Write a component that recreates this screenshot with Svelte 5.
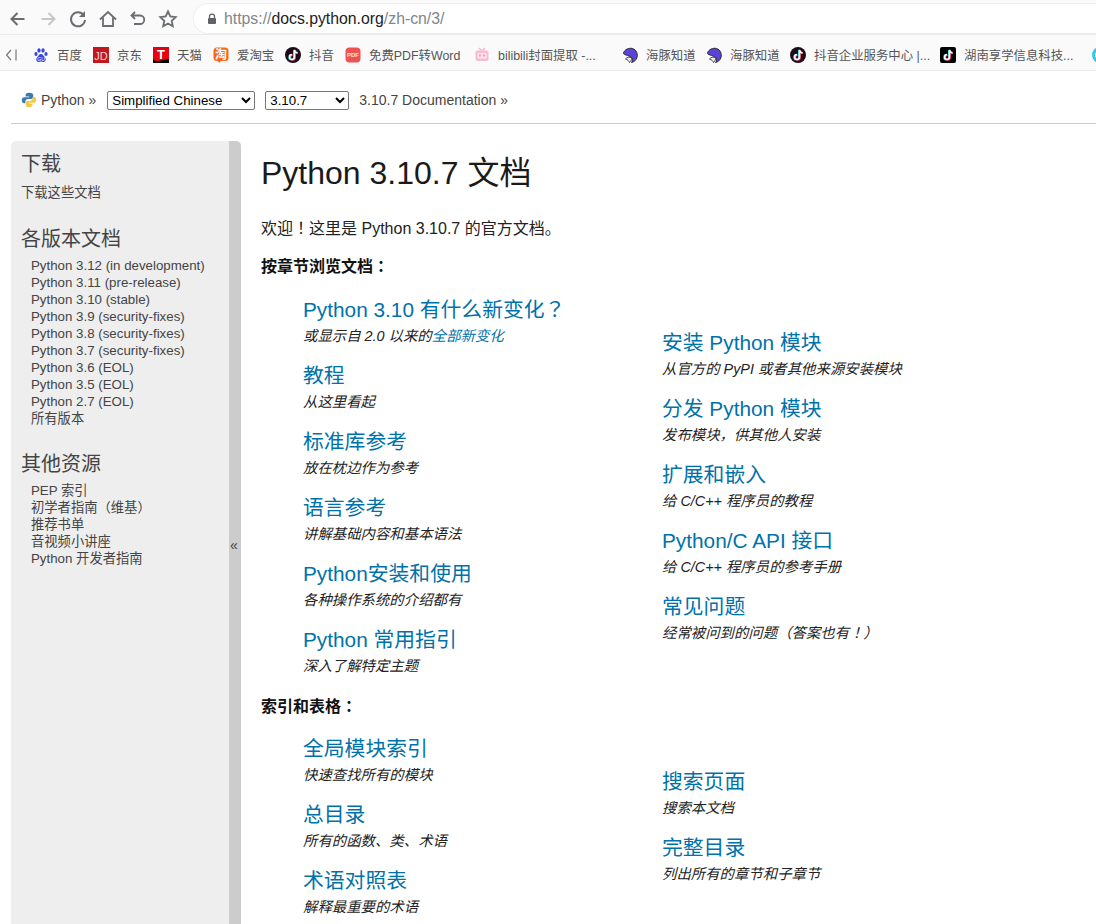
<script>
  const bookmarks = [
    { icon: 'baidu', label: '百度', w: 60 },
    { icon: 'jd', label: '京东', w: 60 },
    { icon: 'tmall', label: '天猫', w: 60 },
    { icon: 'taobao', label: '爱淘宝', w: 72 },
    { icon: 'tiktok', label: '抖音', w: 60 },
    { icon: 'pdf', label: '免费PDF转Word', w: 129 },
    { icon: 'bili', label: 'bilibili封面提取 -...', w: 148 },
    { icon: 'dolphin', label: '海豚知道', w: 84 },
    { icon: 'dolphin', label: '海豚知道', w: 84 },
    { icon: 'tiktok', label: '抖音企业服务中心 |...', w: 150 },
    { icon: 'tiktok2', label: '湖南享学信息科技...', w: 150 }
  ]
  const versions = [
    'Python 3.12 (in development)', 'Python 3.11 (pre-release)', 'Python 3.10 (stable)',
    'Python 3.9 (security-fixes)', 'Python 3.8 (security-fixes)', 'Python 3.7 (security-fixes)',
    'Python 3.6 (EOL)', 'Python 3.5 (EOL)', 'Python 2.7 (EOL)', '所有版本'
  ]
  const others = ['PEP 索引', '初学者指南（维基）', '推荐书单', '音视频小讲座', 'Python 开发者指南']
  const left1 = [
    ['Python 3.10 有什么新变化？', '或显示自 2.0 以来的', '全部新变化'],
    ['教程', '从这里看起'],
    ['标准库参考', '放在枕边作为参考'],
    ['语言参考', '讲解基础内容和基本语法'],
    ['Python安装和使用', '各种操作系统的介绍都有'],
    ['Python 常用指引', '深入了解特定主题']
  ]
  const right1 = [
    ['安装 Python 模块', '从官方的 PyPI 或者其他来源安装模块'],
    ['分发 Python 模块', '发布模块，供其他人安装'],
    ['扩展和嵌入', '给 C/C++ 程序员的教程'],
    ['Python/C API 接口', '给 C/C++ 程序员的参考手册'],
    ['常见问题', '经常被问到的问题（答案也有！）']
  ]
  const left2 = [
    ['全局模块索引', '快速查找所有的模块'],
    ['总目录', '所有的函数、类、术语'],
    ['术语对照表', '解释最重要的术语']
  ]
  const right2 = [
    ['搜索页面', '搜索本文档'],
    ['完整目录', '列出所有的章节和子章节']
  ]

  // full-width punctuation sits centred in the cell in the TC cut of the font
  const parts = (text) => text.split(/([！？（）：])/).filter(Boolean)
  const isPunct = (s) => /^[！？（）：]$/.test(s)
</script>

{#snippet txt(text)}
  {#each parts(text) as p}{#if isPunct(p)}<span class="punct">{p}</span>{:else}{p}{/if}{/each}
{/snippet}

{#snippet favicon(kind)}
  <svg class="fav" viewBox="0 0 16 16" width="16" height="16">
    {#if kind === 'baidu'}
      <ellipse cx="3" cy="7" rx="1.6" ry="2" fill="#3245df" /><ellipse cx="6" cy="3.4" rx="1.6" ry="2.2" fill="#3245df" />
      <ellipse cx="10" cy="3.4" rx="1.6" ry="2.2" fill="#3245df" /><ellipse cx="13" cy="7" rx="1.6" ry="2" fill="#3245df" />
      <path d="M8 7c-2 0-2.4 2-4 3.4C2.6 12 3.4 15 6 15c1 0 1.400-.4 2-.4s1 .4 2 .4c2.600 0 3.400-3 2-4.600C10.400 9 10 7 8 7z" fill="#3245df" />
      <text x="8" y="13.500" class="mark" font-size="5" fill="#fff">GU</text>
    {:else if kind === 'jd'}
      <rect width="16" height="16" fill="#c4161c" />
      <text x="8" y="12.500" class="mark" font-size="11" fill="#f3d6d6">JD</text>
    {:else if kind === 'tmall'}
      <rect width="16" height="16" fill="#e60012" /><path d="M0 12.500c3 2 5 2 8 1s5-1 8-1V16H0z" fill="#000" />
      <text x="8" y="12" class="mark bold" font-size="13" fill="#fff">T</text>
    {:else if kind === 'taobao'}
      <rect x=".5" y=".5" width="15" height="13.500" rx="3.500" fill="#f3671c" /><path d="M5 14l1 2 2-2z" fill="#f3671c" />
      <text x="8" y="11.500" class="mark bold" font-size="12" fill="#fff">淘</text>
    {:else if kind === 'tiktok' || kind === 'tiktok2'}
      {#if kind === 'tiktok'}
        <rect width="16" height="16" rx="8" fill="#1c0b19" />
      {:else}
        <rect width="16" height="16" rx="2" fill="#000" />
      {/if}
      <path d="M9.500 2.800v7.200a2.400 2.400 0 1 1-2.400-2.400M9.500 2.800c.2 1.700 1.300 2.800 3 3" fill="none" stroke="#25f4ee" stroke-width="1.600" transform="translate(-.6 .3)" />
      <path d="M9.500 2.800v7.200a2.400 2.400 0 1 1-2.400-2.400M9.500 2.800c.2 1.700 1.300 2.800 3 3" fill="none" stroke="#fe2c55" stroke-width="1.600" transform="translate(.6 .5)" />
      <path d="M9.500 2.800v7.200a2.400 2.400 0 1 1-2.400-2.400M9.500 2.800c.2 1.700 1.300 2.800 3 3" fill="none" stroke="#fff" stroke-width="1.500" />
    {:else if kind === 'pdf'}
      <rect x=".5" y=".5" width="15" height="15" rx="4" fill="#ee5253" />
      <text x="8" y="10.300" class="mark bold" font-size="6" fill="#fbe3e3">PDF</text>
    {:else if kind === 'bili'}
      <path d="M5 1l2.500 2.500M11 1L8.500 3.500" stroke="#f6afc6" stroke-width="1.300" />
      <rect x="1.500" y="3.500" width="13" height="10.500" rx="2" fill="#f8bcd0" /><rect x="3.500" y="6" width="9" height="5.500" fill="#fde6ee" />
      <rect x="5" y="7.500" width="2" height="2" fill="#f49ab8" /><rect x="9" y="7.500" width="2" height="2" fill="#f49ab8" />
    {:else if kind === 'dolphin'}
      <path d="M1.500 6C2.500 2.500 7 .5 10.500 1.500 14.500 2.700 16 7 15 10.500c-.8 2.700-3 4.500-5.500 5 1-1.500 1.200-3 .5-4.500C8.500 9.500 6 8.500 4 8 3 7.700 1.200 7 1.500 6z" fill="#5c43d8" stroke="#222" stroke-width=".9" />
      <path d="M3.500 12c1.500-2 4-2.500 6.500-1-.5 2-1.500 3.500-2.500 4.500-.5-1.500-2-3-4-3.500z" fill="#e9e9ef" stroke="#222" stroke-width=".8" />
    {/if}
  </svg>
{/snippet}

{#snippet card(item)}
  <div class="card">
    <a class="biglink" href="#top">{@render txt(item[0])}</a>
    <span class="linkdescr">{@render txt(item[1])}{#if item[2]}<a href="#top">{item[2]}</a>{/if}</span>
  </div>
{/snippet}

<div class="chrome">
  <div class="toolbar">
    <svg class="nav" viewBox="0 0 20 20" width="20" height="20"><path d="M16.500 10H4M9.500 4l-6 6 6 6" fill="none" stroke="#6a6d71" stroke-width="2" /></svg>
    <svg class="nav" viewBox="0 0 20 20" width="20" height="20"><path d="M3.500 10H16M10.500 4l6 6-6 6" fill="none" stroke="#c4c7ca" stroke-width="2" /></svg>
    <svg class="nav" viewBox="0 0 20 20" width="20" height="20"><path d="M15.700 6.200A7 7 0 1 0 17 11" fill="none" stroke="#6a6d71" stroke-width="2" /><path d="M17 2v6h-6z" fill="#6a6d71" /></svg>
    <svg class="nav" viewBox="0 0 20 20" width="20" height="20"><path d="M2 10.500 10 3l8 7.500M5 8.500V17h10V8.500" fill="none" stroke="#6a6d71" stroke-width="1.800" /></svg>
    <svg class="nav" viewBox="0 0 20 20" width="20" height="20"><path d="M7 3 3.500 6.500 7 10M4 6.500h8a4 4 0 0 1 0 8.500H6" fill="none" stroke="#6a6d71" stroke-width="1.800" /></svg>
    <svg class="nav" viewBox="0 0 20 20" width="20" height="20"><path d="m10 2.500 2.300 5 5.400.6-4 3.700 1.100 5.400-4.800-2.700-4.800 2.700 1.100-5.400-4-3.700 5.400-.6z" fill="none" stroke="#6a6d71" stroke-width="1.800" /></svg>
    <div class="omnibox">
      <svg viewBox="0 0 12 12" width="12" height="12"><path d="M3.500 5V3.600a2.500 2.500 0 0 1 5 0V5" fill="none" stroke="#5f6368" stroke-width="1.300" /><rect x="2" y="5" width="8" height="6" rx="1" fill="#5f6368" /></svg>
      <span class="url"><span class="dim">https://</span>docs.python.org<span class="dim">/zh-cn/3/</span></span>
    </div>
  </div>
  <div class="bookmarks">
    <span class="collapse"><svg viewBox="0 0 14 14" width="14" height="14"><path d="M6 2 1.500 7 6 12M11 1.500v11" fill="none" stroke="#777" stroke-width="1.200" /></svg></span>
    {#each bookmarks as b}
      <span class="bookmark" style={`width:${b.w}px`}>{@render favicon(b.icon)}<span>{b.label}</span></span>
    {/each}
    <span class="ring"></span>
  </div>
</div>

<div class="related">
  <svg viewBox="0 0 16 16" width="16" height="16">
    <path d="M8 .8C5.500.8 4.600 1.800 4.600 3v1.600H8.200v.6H3.200C1.800 5.200.8 6.300.8 8.200s1 3 2.300 3h1.300V9.400c0-1.300 1.100-2.300 2.400-2.300h3.400c1.100 0 2-.9 2-2V3c0-1.200-1.100-2.200-4-2.200z" fill="#3d7ab0" />
    <path d="M8 15.200c2.500 0 3.400-1 3.400-2.200v-1.600H7.800v-.6h5c1.400 0 2.400-1.100 2.400-3s-1-3-2.300-3h-1.300v1.800c0 1.300-1.100 2.300-2.400 2.300H6.800c-1.100 0-2 .9-2 2V13c0 1.200 1.100 2.200 3.200 2.200z" fill="#f5c93f" />
  </svg>
  <span class="crumb first">Python »</span>
  <select class="lang"><option>Simplified Chinese</option></select>
  <select class="ver"><option>3.10.7</option></select>
  <span class="crumb">3.10.7 Documentation »</span>
</div>
<hr class="rule" />

<div class="docs">
  <aside class="sidebar">
    <div class="side-body">
      <h3>下载</h3>
      <p class="dl">下载这些文档</p>
      <h3 class="spaced">各版本文档</h3>
      <ul>{#each versions as v}<li>{v}</li>{/each}</ul>
      <h3 class="spaced2">其他资源</h3>
      <ul>{#each others as v}<li>{@render txt(v)}</li>{/each}</ul>
    </div>
    <div class="collapser"><span>«</span></div>
  </aside>
  <main class="body">
    <h1>Python 3.10.7 文档</h1>
    <p class="welcome">{@render txt('欢迎！这里是 Python 3.10.7 的官方文档。')}</p>
    <p class="section"><strong>{@render txt('按章节浏览文档：')}</strong></p>
    <div class="table">
      <div class="col">{#each left1 as item}{@render card(item)}{/each}</div>
      <div class="col">{#each right1 as item}{@render card(item)}{/each}</div>
    </div>
    <p class="section second"><strong>{@render txt('索引和表格：')}</strong></p>
    <div class="table">
      <div class="col">{#each left2 as item}{@render card(item)}{/each}</div>
      <div class="col">{#each right2 as item}{@render card(item)}{/each}</div>
    </div>
  </main>
</div>

<style>
  :global(body) {
    margin: 0;
    height: 924px;
    overflow: hidden;
    background: #fff;
    font-family: "Liberation Sans", "Noto Sans CJK SC", sans-serif;
    color: #222;
  }

  .chrome {
    height: 71px;
    background: #fafafa;
    border-bottom: 1px solid #e8eaed;
    box-sizing: border-box;
  }

  .toolbar {
    height: 35px;
    padding: 3px 0 0 8px;
    box-sizing: border-box;
    display: flex;
    align-items: flex-start;
    gap: 10px;
    border-bottom: 1px solid #e8eaed;
  }

  .nav { margin-top: 6px; flex: none; }

  .omnibox {
    margin-left: 5px;
    flex: 1;
    height: 31px;
    box-sizing: border-box;
    background: #fff;
    border: 1px solid #eeeeee;
    border-right: none;
    border-radius: 15px 0 0 15px;
    display: flex;
    align-items: center;
    gap: 6px;
    padding-left: 12px;
  }

  .url { font-size: 15.800px; color: #202124; }
  .dim { color: #80868b; }

  .bookmarks {
    height: 35px;
    padding-top: 4px;
    box-sizing: border-box;
    display: flex;
    align-items: center;
    font-size: 12.400px;
    color: #555;
    white-space: nowrap;
    overflow: hidden;
  }

  .collapse { width: 33px; flex: none; padding-left: 5px; box-sizing: border-box; display: flex; }
  .bookmark { display: flex; align-items: center; gap: 8px; flex: none; }
  .fav { flex: none; }
  .mark { text-anchor: middle; font-family: "Liberation Sans", "Noto Sans CJK SC", sans-serif; }
  .bold { font-weight: bold; }
  .ring { width: 16px; height: 16px; flex: none; box-sizing: border-box; border: 3px solid #36c5e8; border-radius: 50%; margin-left: 2px; }

  .related {
    height: 52px;
    padding: 6px 0 0 21px;
    box-sizing: border-box;
    display: flex;
    align-items: center;
    font-size: 14px;
    color: #444;
  }

  .crumb.first { margin-left: 4px; margin-right: 11px; }

  select {
    font-family: "Liberation Sans", sans-serif;
    font-size: 13.300px;
    height: 19px;
    padding: 0;
    background: #fff;
    border: 1px solid #767676;
    border-radius: 2px;
    color: #000;
  }

  .lang { width: 148px; margin-right: 10px; }
  .ver { width: 84px; margin-right: 10px; }

  .rule {
    margin: 0 0 0 11px;
    border: none;
    border-top: 1px solid #ccc;
  }

  .docs {
    display: flex;
    padding: 17px 0 0 11px;
  }

  .sidebar {
    width: 230px;
    height: 790px;
    flex: none;
    display: flex;
    background: #eeeeee;
    border-radius: 5px 5px 0 0;
    overflow: hidden;
    color: #444;
    font-size: 14px;
  }

  .side-body { width: 218px; padding: 11px 0 0 10px; box-sizing: border-box; }

  h3 {
    margin: 0;
    font-size: 20px;
    font-weight: normal;
    line-height: 25px;
    color: #444;
  }

  .dl { margin: 7px 0 0; line-height: 17px; font-size: 13.300px; }
  .spaced { margin-top: 26px; }
  .spaced2 { margin-top: 25px; }

  ul { list-style: none; margin: 5px 0 0; padding: 0 0 0 10px; }
  li { line-height: 17px; font-size: 13.300px; }

  .collapser {
    width: 12px;
    background: #cccccc;
    position: relative;
    color: #444;
    font-size: 14px;
  }

  .collapser span { position: absolute; left: 1px; top: 396px; }

  .body {
    flex: 1;
    min-width: 0;
    padding: 11px 0 0 20px;
    color: #222;
    font-size: 16px;
  }

  h1 { margin: 0; font-size: 32px; font-weight: normal; line-height: 42px; color: #1a1a1a; }
  .welcome { margin: 23px 0 0; line-height: 24px; }
  .section { margin: 14px 0 0; line-height: 24px; }
  .section.second { margin: 4px 0 -1px; }
  strong { font-weight: bold; color: #111; }

  .punct { font-family: "Noto Sans CJK TC", sans-serif; line-height: 0; }

  .table { display: flex; padding: 0; }
  .col { width: 359px; padding-left: 42px; box-sizing: border-box; padding-top: 16px; }
  .col + .col { padding-top: 49px; }

  .card { height: 66px; display: flex; flex-direction: column; }
  .biglink { font-size: 20.800px; line-height: 30px; color: #0072aa; text-decoration: none; }
  .linkdescr { font-size: 14.400px; line-height: 22px; font-style: italic; color: #222; white-space: nowrap; }
  .linkdescr a { color: #0072aa; text-decoration: none; }
</style>
